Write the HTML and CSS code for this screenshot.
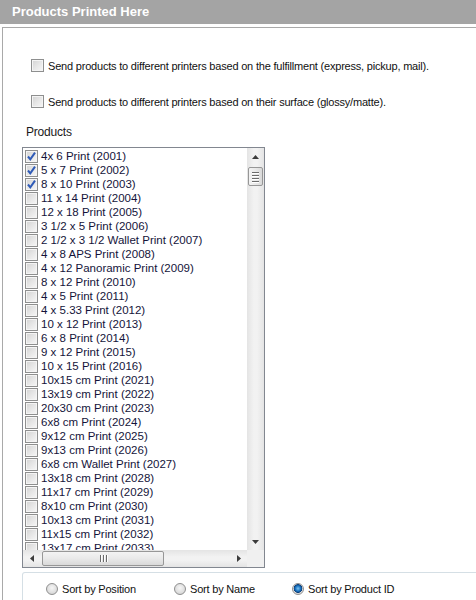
FILE: index.html
```html
<!DOCTYPE html>
<html>
<head>
<meta charset="utf-8">
<link rel="stylesheet" href="styles.css">
</head>
<body>
<div class="header">Products Printed Here</div>
<div class="panel">
  <div class="opt opt-first"><span class="cb"></span><span class="opt-label">Send products to different printers based on the fulfillment (express, pickup, mail).</span></div>
  <div class="opt opt-second"><span class="cb"></span><span class="opt-label">Send products to different printers based on their surface (glossy/matte).</span></div>
  <div class="section-label">Products</div>
  <div class="listbox">
    <div class="items">
      <div class="item"><span class="cb checked"></span>4x 6 Print (2001)</div>
      <div class="item"><span class="cb checked"></span>5 x 7 Print (2002)</div>
      <div class="item"><span class="cb checked"></span>8 x 10 Print (2003)</div>
      <div class="item"><span class="cb"></span>11 x 14 Print (2004)</div>
      <div class="item"><span class="cb"></span>12 x 18 Print (2005)</div>
      <div class="item"><span class="cb"></span>3 1/2 x 5 Print (2006)</div>
      <div class="item"><span class="cb"></span>2 1/2 x 3 1/2 Wallet Print (2007)</div>
      <div class="item"><span class="cb"></span>4 x 8 APS Print (2008)</div>
      <div class="item"><span class="cb"></span>4 x 12 Panoramic Print (2009)</div>
      <div class="item"><span class="cb"></span>8 x 12 Print (2010)</div>
      <div class="item"><span class="cb"></span>4 x 5 Print (2011)</div>
      <div class="item"><span class="cb"></span>4 x 5.33 Print (2012)</div>
      <div class="item"><span class="cb"></span>10 x 12 Print (2013)</div>
      <div class="item"><span class="cb"></span>6 x 8 Print (2014)</div>
      <div class="item"><span class="cb"></span>9 x 12 Print (2015)</div>
      <div class="item"><span class="cb"></span>10 x 15 Print (2016)</div>
      <div class="item"><span class="cb"></span>10x15 cm Print (2021)</div>
      <div class="item"><span class="cb"></span>13x19 cm Print (2022)</div>
      <div class="item"><span class="cb"></span>20x30 cm Print (2023)</div>
      <div class="item"><span class="cb"></span>6x8 cm Print (2024)</div>
      <div class="item"><span class="cb"></span>9x12 cm Print (2025)</div>
      <div class="item"><span class="cb"></span>9x13 cm Print (2026)</div>
      <div class="item"><span class="cb"></span>6x8 cm Wallet Print (2027)</div>
      <div class="item"><span class="cb"></span>13x18 cm Print (2028)</div>
      <div class="item"><span class="cb"></span>11x17 cm Print (2029)</div>
      <div class="item"><span class="cb"></span>8x10 cm Print (2030)</div>
      <div class="item"><span class="cb"></span>10x13 cm Print (2031)</div>
      <div class="item"><span class="cb"></span>11x15 cm Print (2032)</div>
      <div class="item"><span class="cb"></span>13x17 cm Print (2033)</div>
    </div>
    <div class="vscroll">
      <div class="arrow-btn"><svg width="7" height="4" viewBox="0 0 7 4"><path d="M0 4 L3.5 0 L7 4 Z" fill="#3c3c3c"/></svg></div>
      <div class="vthumb"><span class="grip-h"></span><span class="grip-h"></span><span class="grip-h"></span><span class="grip-h"></span></div>
      <div class="vtrack"></div>
      <div class="arrow-btn"><svg width="7" height="4" viewBox="0 0 7 4"><path d="M0 0 L3.5 4 L7 0 Z" fill="#3c3c3c"/></svg></div>
    </div>
    <div class="hscroll">
      <div class="arrow-btn h"><svg width="4" height="7" viewBox="0 0 4 7"><path d="M4 0 L0 3.5 L4 7 Z" fill="#3c3c3c"/></svg></div>
      <div class="hthumb"><span class="grip-v"></span><span class="grip-v"></span><span class="grip-v"></span></div>
      <div class="htrack"></div>
      <div class="arrow-btn h"><svg width="4" height="7" viewBox="0 0 4 7"><path d="M0 0 L4 3.5 L0 7 Z" fill="#3c3c3c"/></svg></div>
    </div>
    <div class="corner"></div>
  </div>
  <div class="sortgroup">
    <div class="radio-item r1"><span class="radio"></span>Sort by Position</div>
    <div class="radio-item r2"><span class="radio"></span>Sort by Name</div>
    <div class="radio-item"><span class="radio on"></span>Sort by Product ID</div>
  </div>
</div>
</body>
</html>
```

FILE: styles.css
```css
html, body {
  margin: 0;
  padding: 0;
  background: #ffffff;
  overflow: hidden;
}
body {
  font-family: "Liberation Sans", Arial, sans-serif;
  color: #1a1a1a;
  width: 476px;
  height: 600px;
}
.header {
  height: 24px;
  background: #a4a4a4;
  color: #ffffff;
  font-weight: bold;
  font-size: 13px;
  line-height: 24px;
  padding-left: 12px;
  box-sizing: border-box;
}
.panel {
  margin-top: 3px;
  margin-left: 2px;
  border-top: 1px solid #a9a9a9;
  border-left: 1px solid #a9a9a9;
  padding-left: 19px;
}
.opt {
  display: flex;
  align-items: center;
  height: 13px;
  padding-left: 9px;
  font-size: 11px;
  letter-spacing: -0.2px;
  color: #111;
}
.opt-first { margin-top: 31px; }
.opt-second { margin-top: 23px; }
.opt-label { margin-left: 4px; }
.cb {
  display: inline-block;
  flex: none;
  width: 13px;
  height: 13px;
  box-sizing: border-box;
  border: 1px solid #8e8f8f;
  background: linear-gradient(135deg, #d2d2d2 0%, #e6e6e6 50%, #f7f7f7 100%);
  box-shadow: inset 0 0 0 1px #f4f4f4;
}
.cb.checked {
  background-color: #f0f0f0;
  background-image: url("data:image/svg+xml;utf8,<svg xmlns='http://www.w3.org/2000/svg' width='11' height='11' viewBox='0 0 11 11'><path d='M2 5.5 L4.3 8.3 L9 1.6' fill='none' stroke='%232f5bb7' stroke-width='2'/></svg>"), linear-gradient(135deg, #d2d2d2 0%, #e6e6e6 50%, #f7f7f7 100%);
  background-repeat: no-repeat;
  background-position: center;
}
.section-label {
  margin-top: 17px;
  padding-left: 4px;
  font-size: 12px;
  line-height: 14px;
  height: 14px;
  letter-spacing: -0.2px;
}
.listbox {
  margin-top: 8px;
  width: 243px;
  height: 421px;
  box-sizing: border-box;
  border: 1px solid #828790;
  display: grid;
  grid-template-columns: 1fr 17px;
  grid-template-rows: 1fr 17px;
}
.items {
  overflow: hidden;
  padding: 2px 0 0 2px;
}
.item {
  display: flex;
  align-items: flex-start;
  height: 14px;
  line-height: 13px;
  font-size: 11.5px;
  white-space: nowrap;
  color: #14143a;
}
.item .cb { margin-right: 3px; margin-top: 0; }
.vscroll {
  display: flex;
  flex-direction: column;
  background: linear-gradient(90deg, #e4e4e4, #f2f2f2 40%, #f2f2f2 60%, #e4e4e4);
}
.arrow-btn {
  height: 17px;
  display: flex;
  align-items: center;
  justify-content: center;
  flex: none;
}
.arrow-btn.h { width: 17px; height: auto; }
.vthumb {
  margin: 2px 1px 0 1px;
  height: 19px;
  box-sizing: border-box;
  border: 1px solid #979797;
  border-radius: 2px;
  background: linear-gradient(90deg, #f3f3f3, #e9e9e9 50%, #d9d9d9);
  display: flex;
  flex-direction: column;
  align-items: center;
  justify-content: center;
  gap: 2px;
  flex: none;
}
.grip-h {
  width: 7px;
  height: 1px;
  background: #6b6b6b;
  box-shadow: 0 1px 0 #ffffff;
}
.vtrack { flex: 1; }
.hscroll {
  display: flex;
  background: linear-gradient(180deg, #e4e4e4, #f2f2f2 40%, #f2f2f2 60%, #e4e4e4);
}
.hthumb {
  margin: 1px 0 1px 2px;
  width: 122px;
  box-sizing: border-box;
  border: 1px solid #979797;
  border-radius: 2px;
  background: linear-gradient(180deg, #f3f3f3, #e9e9e9 50%, #d9d9d9);
  display: flex;
  align-items: center;
  justify-content: center;
  gap: 2px;
  flex: none;
}
.grip-v {
  width: 1px;
  height: 7px;
  background: #6b6b6b;
  box-shadow: 1px 0 0 #ffffff;
}
.htrack { flex: 1; }
.corner { background: #f0f0f0; }
.sortgroup {
  margin-top: 4px;
  height: 29px;
  box-sizing: border-box;
  margin-right: -10px;
  border: 1px solid #d5dfe5;
  border-bottom: none;
  border-radius: 3px 3px 0 0;
  display: flex;
  align-items: flex-start;
  padding: 10px 0 0 23px;
  font-size: 11px;
  letter-spacing: -0.2px;
}
.radio-item {
  display: flex;
  align-items: center;
  height: 12px;
  line-height: 12px;
  color: #111;
}
.r1 { width: 128px; }
.r2 { width: 118px; }
.radio {
  width: 12px;
  height: 12px;
  box-sizing: border-box;
  border-radius: 50%;
  border: 1px solid #8f8f8f;
  background: radial-gradient(circle at 50% 40%, #f6f6f6 0%, #dedede 60%, #c9c9c9 100%);
  margin-right: 4px;
  flex: none;
}
.radio.on {
  background: radial-gradient(circle at 50% 45%, #7fc4f0 0%, #1a75c4 35%, #0c3f7a 55%, #d8d8d8 62%, #efefef 100%);
}
```
